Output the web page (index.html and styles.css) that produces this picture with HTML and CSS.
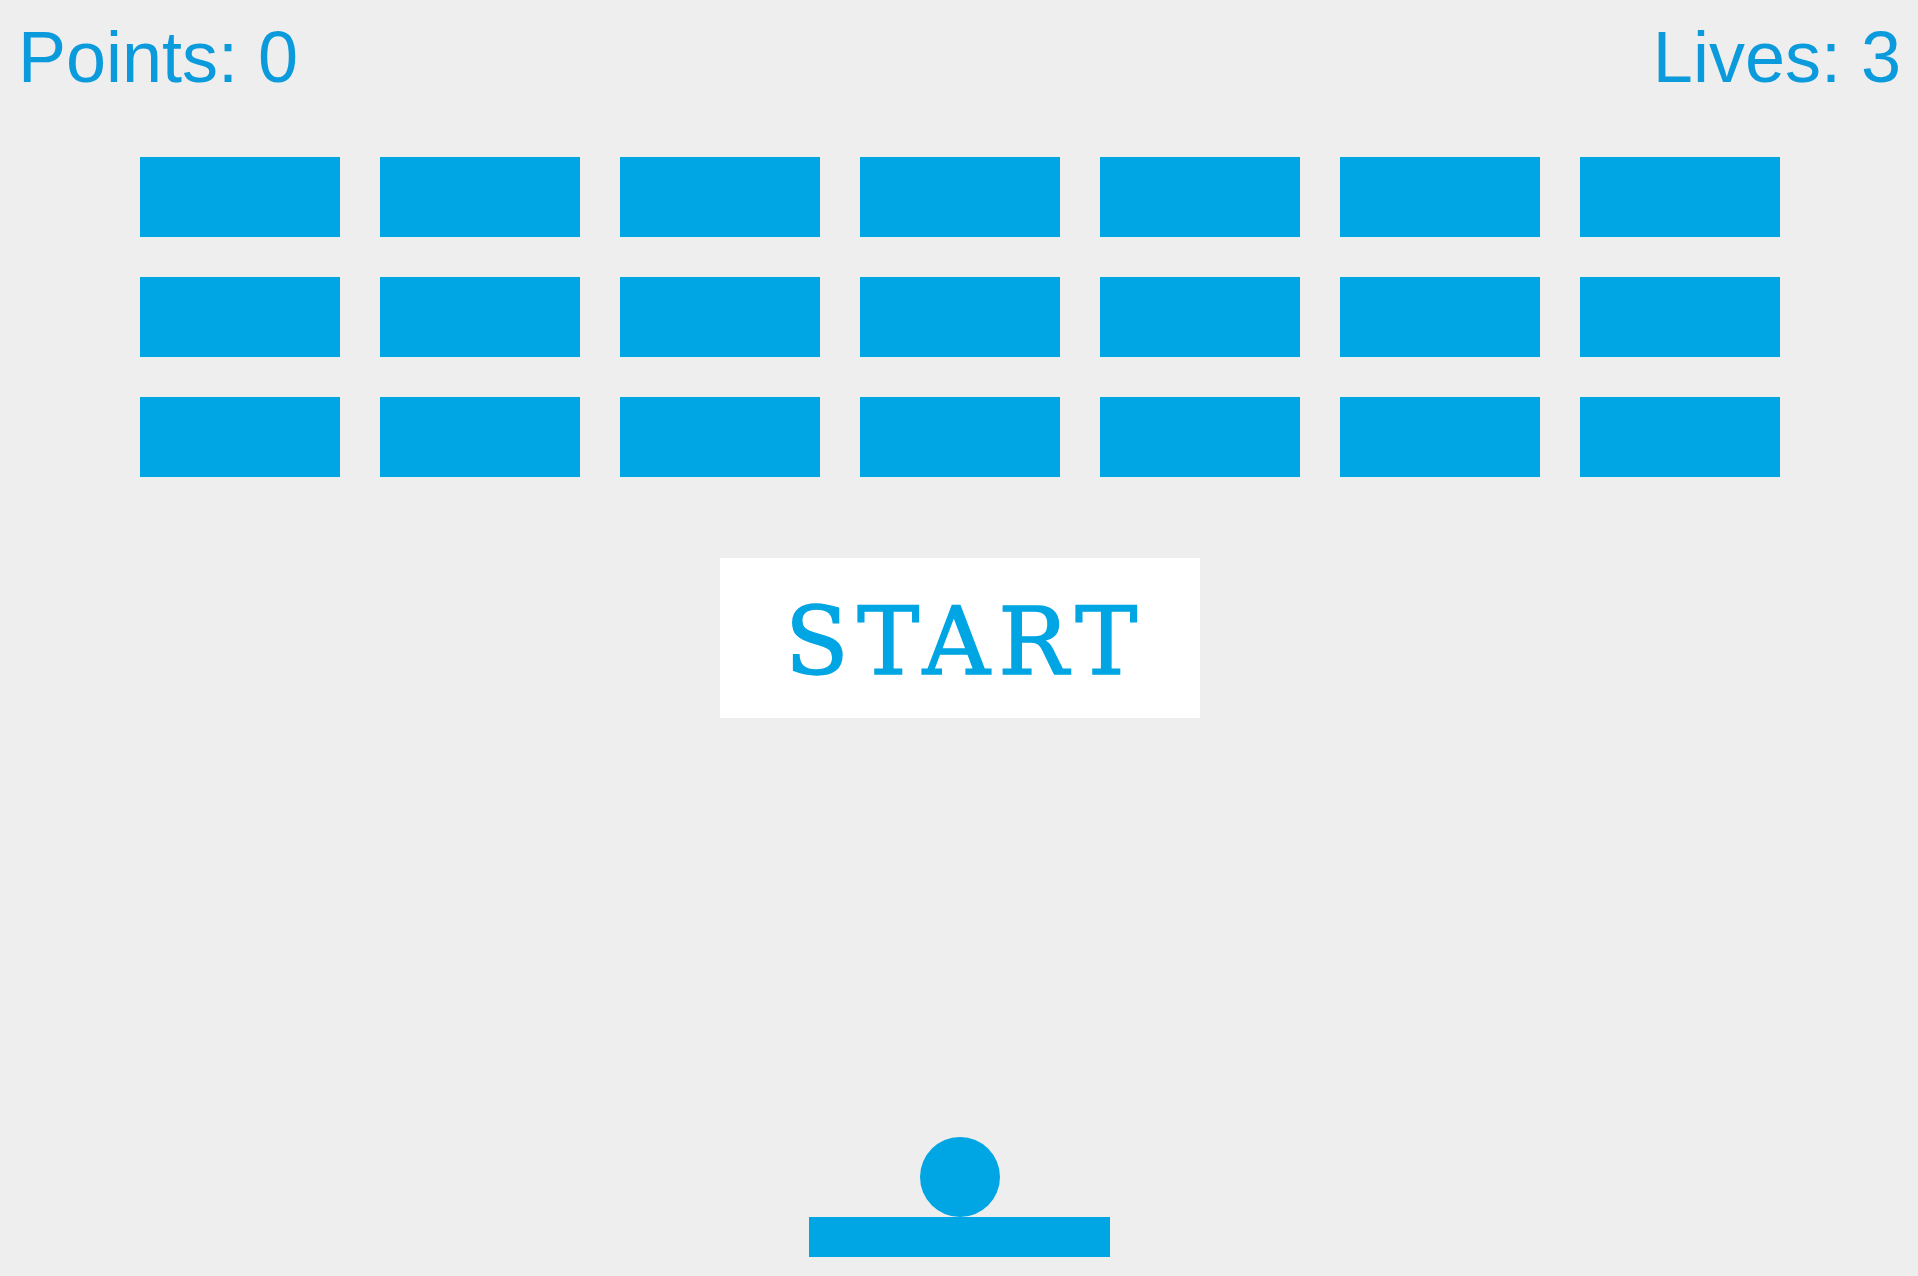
FILE: index.html
```html
<!DOCTYPE html>
<html>
<head>
<meta charset="utf-8">
<title>Breakout</title>
<link rel="stylesheet" href="styles.css">
</head>
<body>
<div class="game">
  <div class="hud">
    <span class="score">Points: 0</span>
    <span class="lives">Lives: 3</span>
  </div>
  <div class="bricks">
    <div class="brick"></div><div class="brick"></div><div class="brick"></div><div class="brick"></div><div class="brick"></div><div class="brick"></div><div class="brick"></div>
    <div class="brick"></div><div class="brick"></div><div class="brick"></div><div class="brick"></div><div class="brick"></div><div class="brick"></div><div class="brick"></div>
    <div class="brick"></div><div class="brick"></div><div class="brick"></div><div class="brick"></div><div class="brick"></div><div class="brick"></div><div class="brick"></div>
  </div>
  <button class="start">START</button>
  <div class="ball"></div>
  <div class="paddle"></div>
</div>
</body>
</html>
```
FILE: styles.css
```css
html, body {
  margin: 0;
  padding: 0;
  background: #eeeeee;
}
.game {
  width: 1918px;
  height: 1276px;
  overflow: hidden;
  display: flex;
  flex-direction: column;
}
.hud {
  display: flex;
  justify-content: space-between;
  padding: 21px 17px 0 18px;
  font-family: "Liberation Sans", Arial, sans-serif;
  font-size: 72px;
  line-height: 72px;
  color: #0b9bdc;
}
.bricks {
  margin: 64px 0 0 140px;
  display: grid;
  grid-template-columns: repeat(7, 200px);
  grid-auto-rows: 80px;
  column-gap: 40px;
  row-gap: 40px;
}
.brick {
  background: #00a5e3;
}
.start {
  align-self: center;
  margin: 81px 0 0 2px;
  width: 480px;
  height: 160px;
  border: 0;
  padding: 8px 0 0 65px;
  text-align: left;
  background: #ffffff;
  color: #00a5e3;
  font-family: "DejaVu Serif", "Liberation Serif", serif;
  font-size: 93px;
  letter-spacing: 8.5px;
  line-height: 152px;
  -webkit-text-stroke: 1.5px #00a5e3;
}
.ball {
  align-self: center;
  margin: 419px 0 0 2px;
  width: 80px;
  height: 80px;
  border-radius: 50%;
  background: #00a5e3;
}
.paddle {
  align-self: center;
  margin-left: 1px;
  width: 301px;
  height: 40px;
  background: #00a5e3;
}
```
